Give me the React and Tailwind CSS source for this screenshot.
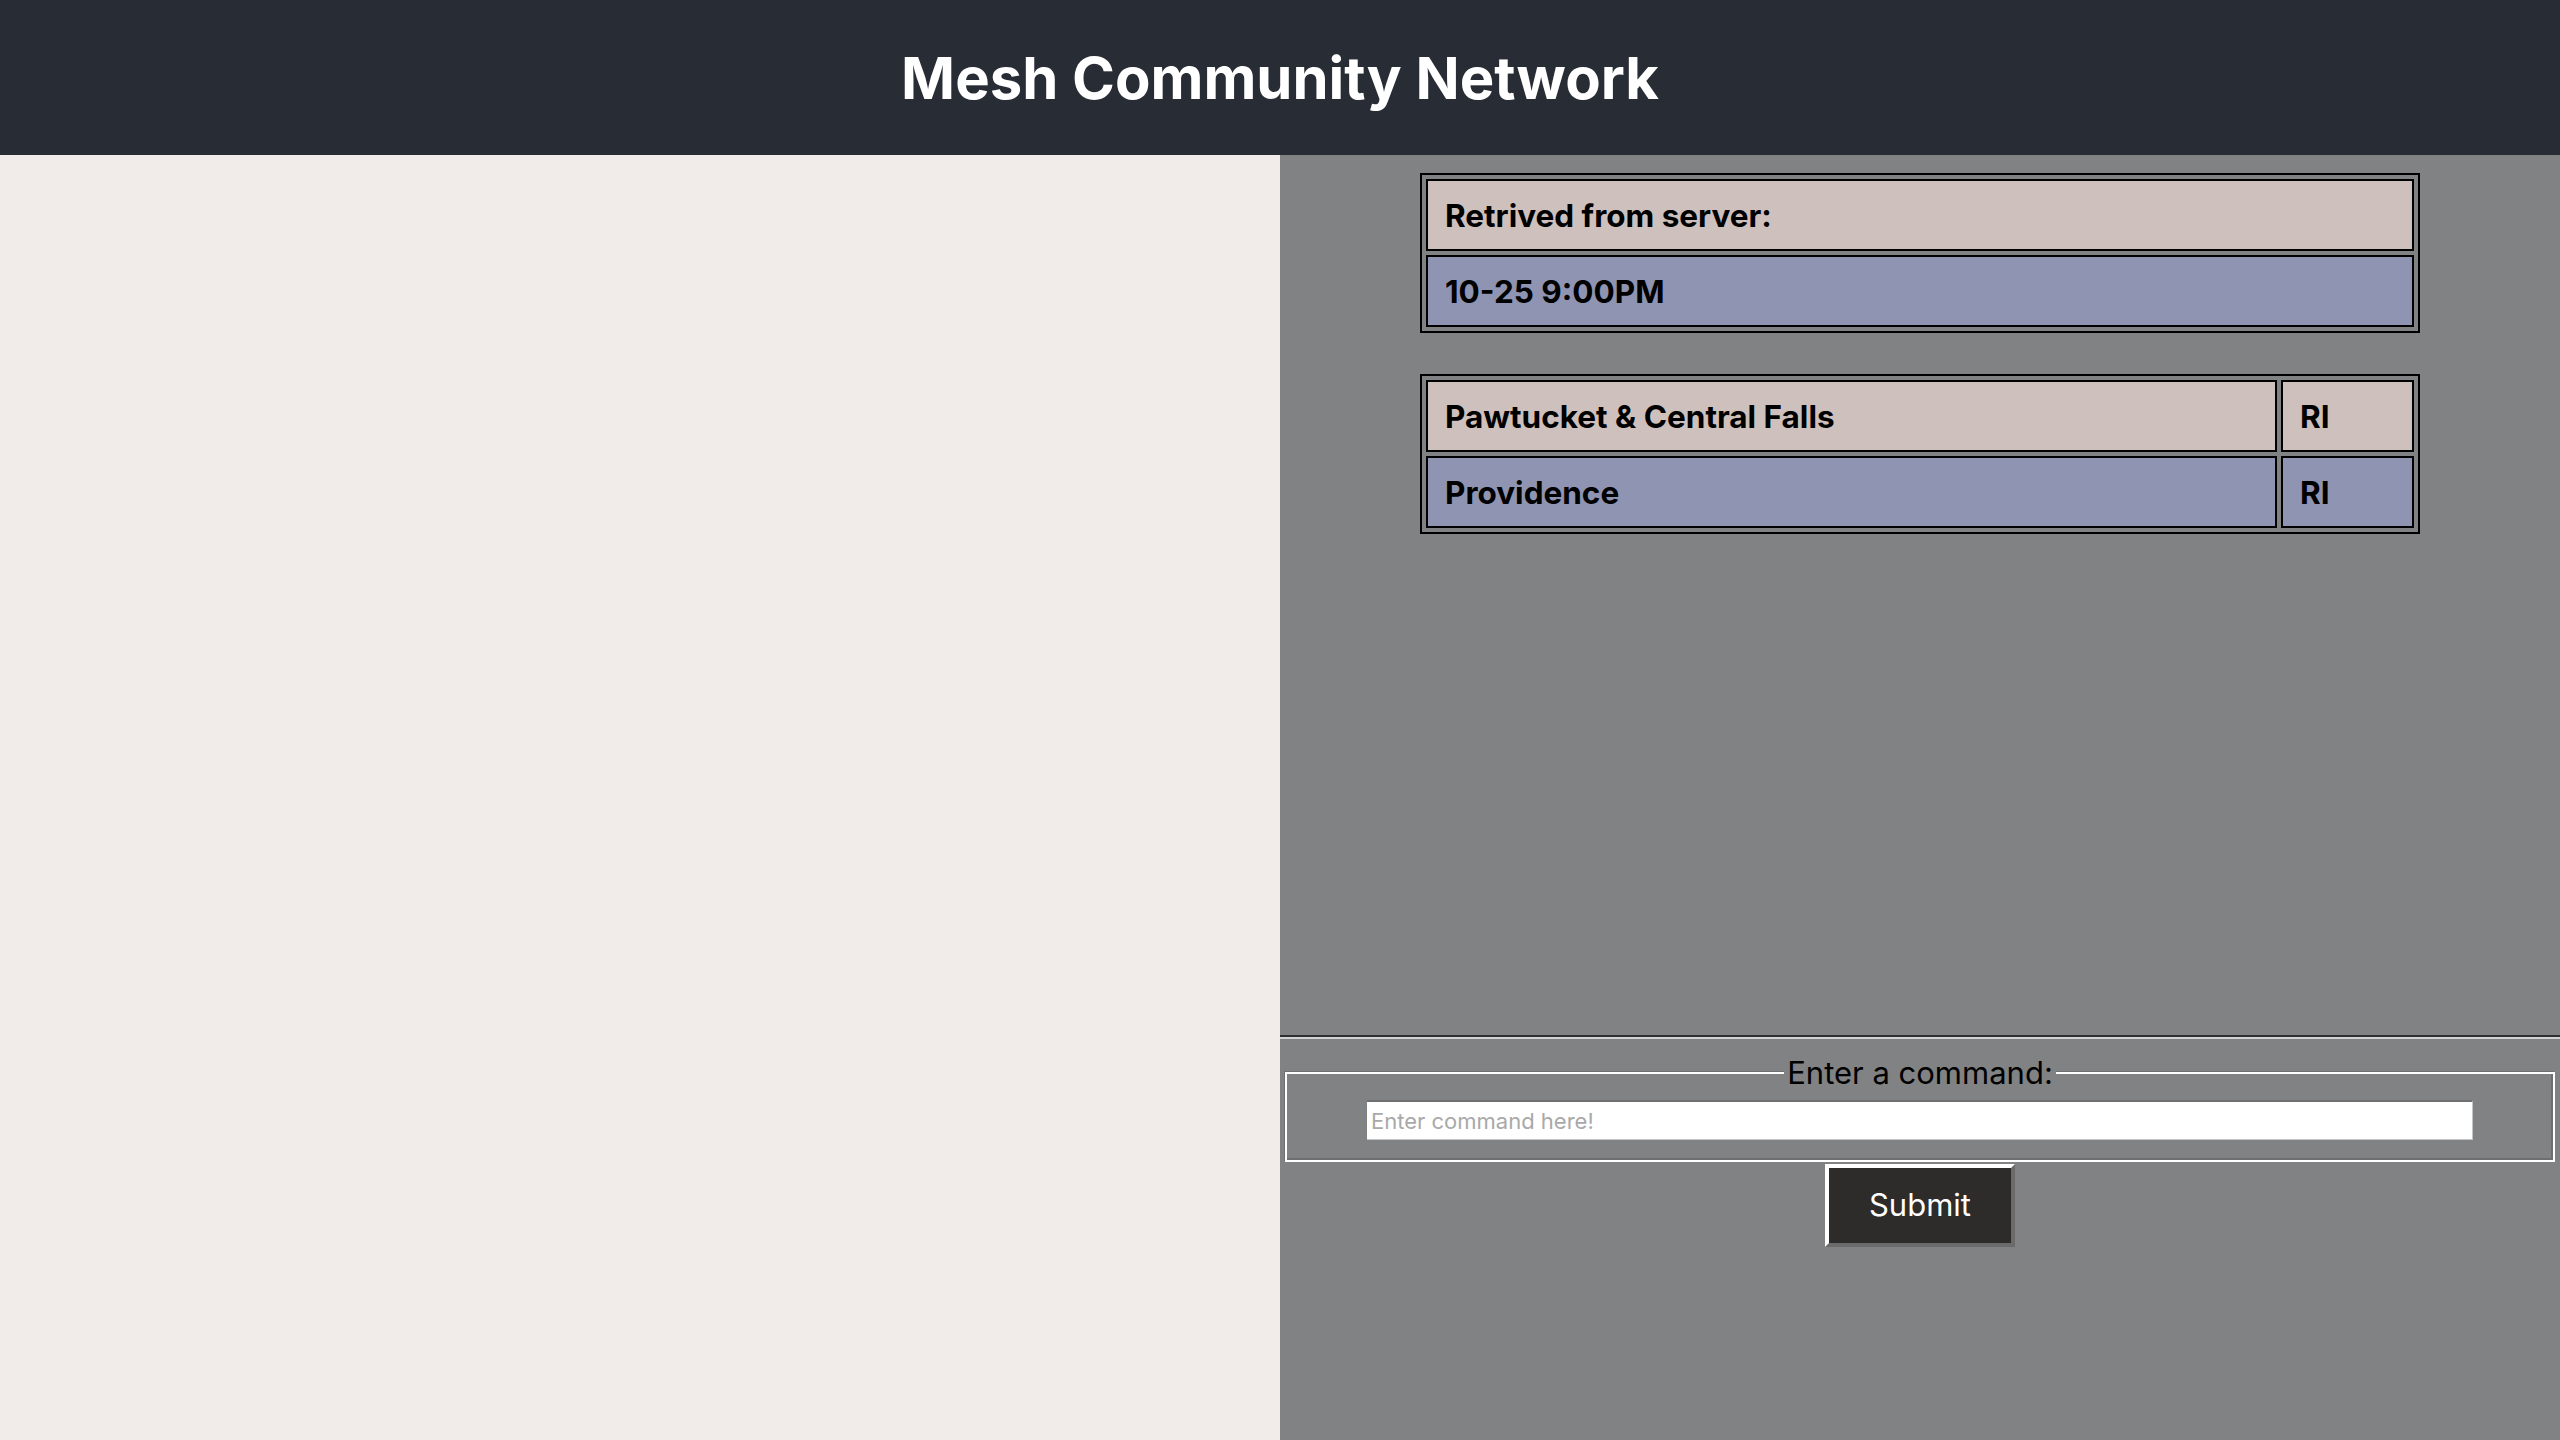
import React from 'react';

const rows = [
  { city: 'Pawtucket & Central Falls', state: 'RI', bg: 'bg-[#cec0bc]' },
  { city: 'Providence', state: 'RI', bg: 'bg-[#8f94b3]' },
];

const App = () => {
  return (
    <div className="min-h-screen flex flex-col font-['Inter','Noto_Sans',sans-serif]">
      {/* Header */}
      <header className="h-[155px] bg-[#282c34] flex items-center justify-center">
        <h1 className="text-[58px] font-bold text-white leading-none">Mesh Community Network</h1>
      </header>

      <div className="flex-1 grid grid-cols-2">
        {/* Map area */}
        <div className="bg-[#f1ece9]" />

        {/* Side panel */}
        <div className="bg-[#818284] flex flex-col">
          <div className="h-[880px] pt-[18px] flex flex-col gap-[41px]">
            <table className="w-[1000px] mx-auto border-2 border-black border-separate border-spacing-[4px]">
              <tbody>
                <tr>
                  <td className="h-[72px] border-2 border-black bg-[#cec0bc] px-[17px] pt-[2px] text-[31.5px] font-bold text-black">
                    Retrived from server:
                  </td>
                </tr>
                <tr>
                  <td className="h-[72px] border-2 border-black bg-[#8f94b3] px-[17px] pt-[2px] text-[31.5px] font-bold text-black">
                    10-25 9:00PM
                  </td>
                </tr>
              </tbody>
            </table>

            <table className="w-[1000px] mx-auto border-2 border-black border-separate border-spacing-[4px]">
              <tbody>
                {rows.map((row, i) => (
                  <tr key={i}>
                    <td className={`h-[72px] border-2 border-black ${row.bg} px-[17px] pt-[2px] text-[31.5px] font-bold text-black`}>
                      {row.city}
                    </td>
                    <td className={`w-[133px] h-[72px] border-2 border-black ${row.bg} px-[17px] pt-[2px] text-[31.5px] font-bold text-black`}>
                      {row.state}
                    </td>
                  </tr>
                ))}
              </tbody>
            </table>
          </div>

          <hr className="border-0 border-t-2 border-t-[#2f2f2f] border-b-2 border-b-[#d2d2d2]" />

          {/* Command form */}
          <fieldset className="mx-[5px] mt-[16px] border-2 border-white shadow-[-1px_-1px_0_#6f6f6f,inset_-2px_-2px_0_#6f6f6f]">
            <legend className="mx-auto px-[3px] bg-[#818284] text-[31px] leading-[36px] text-black">
              Enter a command:
            </legend>
            <div className="pt-[9px] pb-[20px] flex justify-center">
              <input
                type="text"
                placeholder="Enter command here!"
                className="w-[1106px] h-[40px] bg-white border-t-2 border-t-[#707070] border-b border-r border-b-[#c4c4c4] border-r-[#c4c4c4] px-[4px] text-[22px] text-black placeholder:text-[#a9a9a9] outline-none"
              />
            </div>
          </fieldset>
          <button className="mx-auto mt-[2px] w-[190px] h-[83px] bg-[#2d2c2a] border-4 border-t-white border-l-white border-b-[#6b6b6b] border-r-[#6b6b6b] text-[31px] text-white">
            Submit
          </button>
        </div>
      </div>
    </div>
  );
};

export default App;
